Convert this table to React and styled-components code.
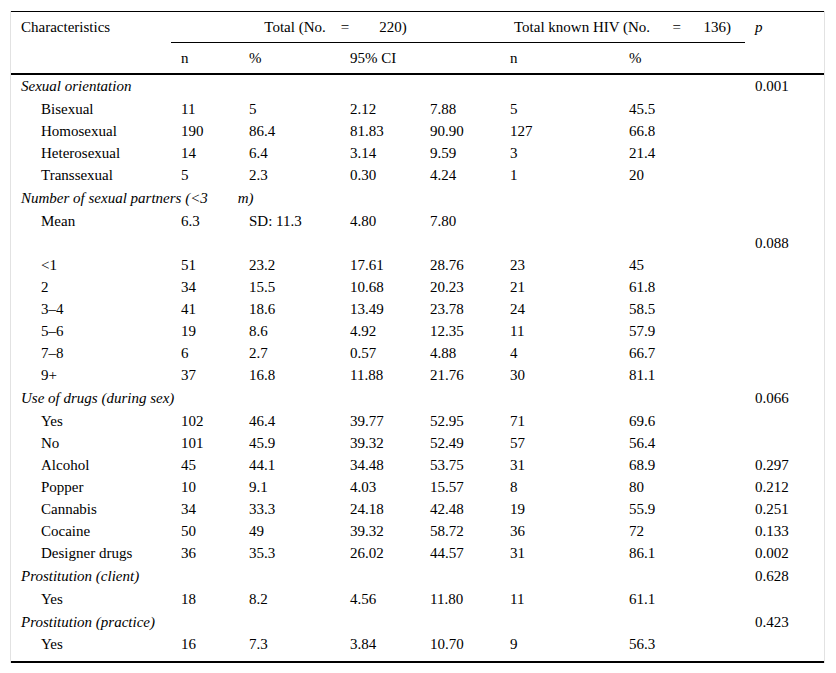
import styled, { createGlobalStyle } from "styled-components";

const GlobalStyle = createGlobalStyle`
  body {
    margin: 0;
    background: #fff;
    font-family: "Liberation Serif", "Times New Roman", serif;
    color: #000;
  }
`;

const Frame = styled.div`
  margin: 11px 0 0 10px;
  width: 813px;
  border-left: 1px solid #e2e2e2;
  border-right: 1px solid #e2e2e2;
`;

const Table = styled.table`
  width: 813px;
  table-layout: fixed;
  border-collapse: collapse;
  font-family: "Liberation Serif", "Times New Roman", serif;
  font-size: 15px;
  color: #000;
  border-top: 1px solid #000;
  border-bottom: 2px solid #000;
`;

const HeadCell = styled.th`
  font-family: "Liberation Serif", "Times New Roman", serif;
  font-weight: normal;
  text-align: ${(props) => (props.center ? "center" : "left")};
  vertical-align: top;
  padding: 7px 0 0 ${(props) => (props.center ? "0" : "10px")};
  height: 23px;
  font-style: ${(props) => (props.italic ? "italic" : "normal")};
  border-bottom: ${(props) => props.line};
  white-space: pre;
`;

const HeadRow = styled.tr``;

const Row = styled.tr`
  height: ${(props) => (props.group ? "24px" : "22px")};
`;

const Cell = styled.td`
  font-family: "Liberation Serif", "Times New Roman", serif;
  padding: 0 0 0 ${(props) => (props.indent ? "30px" : "10px")};
  font-style: ${(props) => (props.italic ? "italic" : "normal")};
  white-space: pre;
  vertical-align: middle;
`;

const LastRow = styled(Row)`
  height: 28px;
  & > td {
    padding-bottom: 6px;
  }
`;

const widths = [160, 68, 101, 80, 80, 119, 126, 79];

const rows = [
  { group: "Sexual orientation", p: "0.001" },
  { label: "Bisexual", v: ["11", "5", "2.12", "7.88", "5", "45.5", ""] },
  { label: "Homosexual", v: ["190", "86.4", "81.83", "90.90", "127", "66.8", ""] },
  { label: "Heterosexual", v: ["14", "6.4", "3.14", "9.59", "3", "21.4", ""] },
  { label: "Transsexual", v: ["5", "2.3", "0.30", "4.24", "1", "20", ""] },
  { group: "Number of sexual partners (<3        m)", p: "" },
  { label: "Mean", v: ["6.3", "SD: 11.3", "4.80", "7.80", "", "", ""] },
  { label: "", v: ["", "", "", "", "", "", "0.088"] },
  { label: "<1", v: ["51", "23.2", "17.61", "28.76", "23", "45", ""] },
  { label: "2", v: ["34", "15.5", "10.68", "20.23", "21", "61.8", ""] },
  { label: "3–4", v: ["41", "18.6", "13.49", "23.78", "24", "58.5", ""] },
  { label: "5–6", v: ["19", "8.6", "4.92", "12.35", "11", "57.9", ""] },
  { label: "7–8", v: ["6", "2.7", "0.57", "4.88", "4", "66.7", ""] },
  { label: "9+", v: ["37", "16.8", "11.88", "21.76", "30", "81.1", ""] },
  { group: "Use of drugs (during sex)", p: "0.066" },
  { label: "Yes", v: ["102", "46.4", "39.77", "52.95", "71", "69.6", ""] },
  { label: "No", v: ["101", "45.9", "39.32", "52.49", "57", "56.4", ""] },
  { label: "Alcohol", v: ["45", "44.1", "34.48", "53.75", "31", "68.9", "0.297"] },
  { label: "Popper", v: ["10", "9.1", "4.03", "15.57", "8", "80", "0.212"] },
  { label: "Cannabis", v: ["34", "33.3", "24.18", "42.48", "19", "55.9", "0.251"] },
  { label: "Cocaine", v: ["50", "49", "39.32", "58.72", "36", "72", "0.133"] },
  { label: "Designer drugs", v: ["36", "35.3", "26.02", "44.57", "31", "86.1", "0.002"] },
  { group: "Prostitution (client)", p: "0.628" },
  { label: "Yes", v: ["18", "8.2", "4.56", "11.80", "11", "61.1", ""] },
  { group: "Prostitution (practice)", p: "0.423" },
  { label: "Yes", v: ["16", "7.3", "3.84", "10.70", "9", "56.3", ""] },
];

const App = () => {
  return (
    <>
      <GlobalStyle />
      <Frame>
        <Table>
          <colgroup>
            {widths.map((w, i) => (
              <col key={i} style={{ width: w }} />
            ))}
          </colgroup>
          <thead>
            <HeadRow>
              <HeadCell>Characteristics</HeadCell>
              <HeadCell colSpan={4} center line="1.5px solid #000">
                {"Total (No.\u2002\u2002=\u2002\u2002\u2002\u2002220)"}
              </HeadCell>
              <HeadCell colSpan={2} center line="1.5px solid #000">
                {"Total known HIV (No.\u2002\u2002\u2002=\u2002\u2002\u2002136)"}
              </HeadCell>
              <HeadCell italic>p</HeadCell>
            </HeadRow>
            <HeadRow>
              <HeadCell line="2px solid #000"></HeadCell>
              <HeadCell line="2px solid #000">n</HeadCell>
              <HeadCell line="2px solid #000">%</HeadCell>
              <HeadCell colSpan={2} line="2px solid #000">95% CI</HeadCell>
              <HeadCell line="2px solid #000">n</HeadCell>
              <HeadCell line="2px solid #000">%</HeadCell>
              <HeadCell line="2px solid #000"></HeadCell>
            </HeadRow>
          </thead>
          <tbody>
            {rows.map((r, i) => {
              if (r.group) {
                return (
                  <Row group key={i}>
                    <Cell italic colSpan={7}>{r.group}</Cell>
                    <Cell>{r.p}</Cell>
                  </Row>
                );
              }
              const RowKind = i === rows.length - 1 ? LastRow : Row;
              return (
                <RowKind key={i}>
                  <Cell indent>{r.label}</Cell>
                  {r.v.map((val, j) => (
                    <Cell key={j}>{val}</Cell>
                  ))}
                </RowKind>
              );
            })}
          </tbody>
        </Table>
      </Frame>
    </>
  );
};

export default App;
